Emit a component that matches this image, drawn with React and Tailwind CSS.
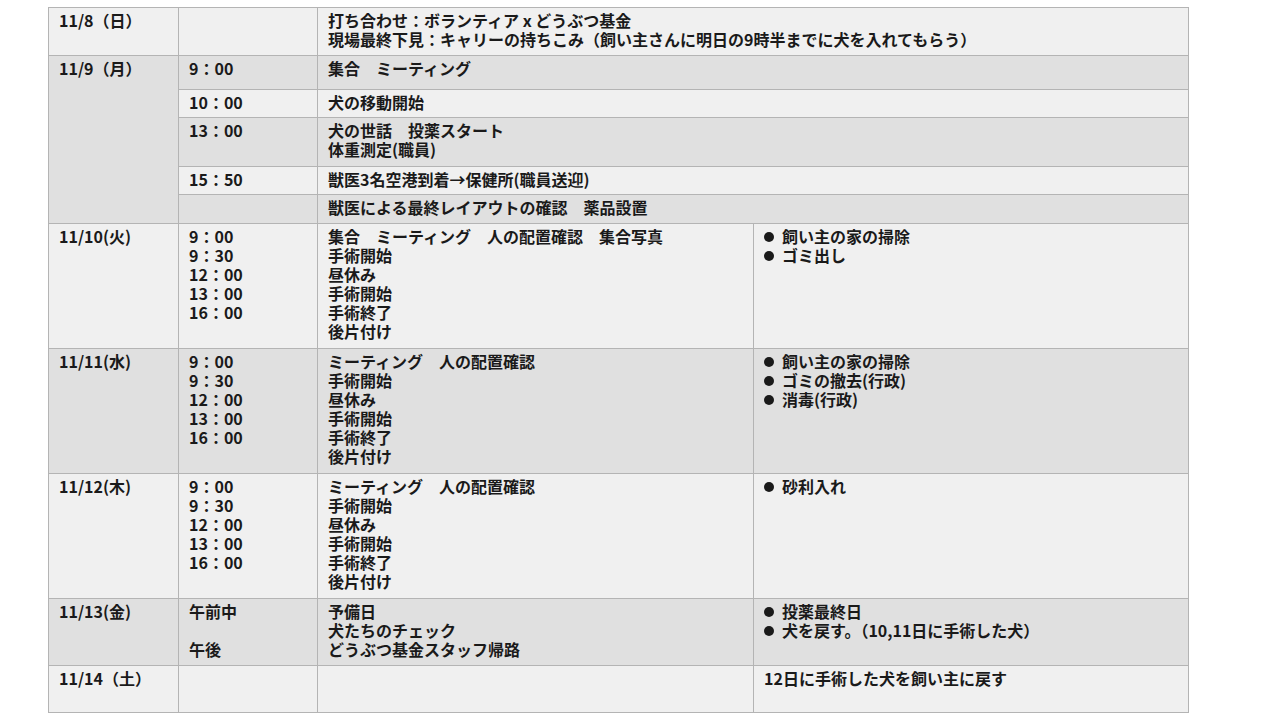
import React from 'react';

const LIGHT = 'bg-[#f0f0f0]';
const DARK = 'bg-[#e0e0e0]';
const cell = 'border border-[#b4b4b4] align-top pl-[10px] pr-2 pt-[3px] pb-0';

const Lines = ({ lines }) => (
  <>
    {lines.map((l, i) => (
      <div key={i} className="whitespace-pre">
        {l}
      </div>
    ))}
  </>
);

const Bullets = ({ items }) => (
  <>
    {items.map((l, i) => (
      <div key={i} className="flex items-center whitespace-pre">
        <span className="inline-block w-[10px] h-[10px] rounded-full bg-[#1a1a1a] mr-[8px]"></span>
        {l}
      </div>
    ))}
  </>
);

const surgery = ['9：00', '9：30', '12：00', '13：00', '16：00'];
const surgeryTasks = ['手術開始', '昼休み', '手術開始', '手術終了', '後片付け'];

const days = [
  {
    date: '11/10(火)',
    bg: LIGHT,
    h: 'h-[125px]',
    times: surgery,
    tasks: ['集合　ミーティング　人の配置確認　集合写真', ...surgeryTasks],
    notes: ['飼い主の家の掃除', 'ゴミ出し'],
  },
  {
    date: '11/11(水)',
    bg: DARK,
    h: 'h-[125px]',
    times: surgery,
    tasks: ['ミーティング　人の配置確認', ...surgeryTasks],
    notes: ['飼い主の家の掃除', 'ゴミの撤去(行政)', '消毒(行政)'],
  },
  {
    date: '11/12(木)',
    bg: LIGHT,
    h: 'h-[125px]',
    times: surgery,
    tasks: ['ミーティング　人の配置確認', ...surgeryTasks],
    notes: ['砂利入れ'],
  },
  {
    date: '11/13(金)',
    bg: DARK,
    h: 'h-[67px]',
    times: ['午前中', ' ', '午後'],
    tasks: ['予備日', '犬たちのチェック', 'どうぶつ基金スタッフ帰路'],
    notes: ['投薬最終日', '犬を戻す。（10,11日に手術した犬）'],
  },
];

export default function App() {
  return (
    <div
      className="w-[1280px] h-[720px] bg-white overflow-hidden text-[16px] leading-[19px] font-bold text-[#1a1a1a]"
      style={{ fontFamily: '"Noto Sans CJK JP", "Noto Sans", sans-serif' }}
    >
      <div className="pl-[48px] pt-[7px]">
        <table className="table-fixed border-collapse w-[1140px]">
          <colgroup>
            <col className="w-[130px]" />
            <col className="w-[139px]" />
            <col className="w-[436px]" />
            <col className="w-[435px]" />
          </colgroup>
          <tbody>
            {/* 11/8 */}
            <tr className={`h-[48px] ${LIGHT}`}>
              <td className={cell}>11/8（日）</td>
              <td className={cell}></td>
              <td className={cell} colSpan={2}>
                <Lines
                  lines={[
                    '打ち合わせ：ボランティア x どうぶつ基金',
                    '現場最終下見：キャリーの持ちこみ（飼い主さんに明日の9時半までに犬を入れてもらう）',
                  ]}
                />
              </td>
            </tr>

            {/* 11/9 */}
            <tr className={`h-[34px] ${DARK}`}>
              <td className={cell} rowSpan={5}>11/9（月）</td>
              <td className={cell}>9：00</td>
              <td className={cell} colSpan={2}>集合　ミーティング</td>
            </tr>
            <tr className={`h-[28px] ${LIGHT}`}>
              <td className={cell}>10：00</td>
              <td className={cell} colSpan={2}>犬の移動開始</td>
            </tr>
            <tr className={`h-[49px] ${DARK}`}>
              <td className={cell}>13：00</td>
              <td className={cell} colSpan={2}>
                <Lines lines={['犬の世話　投薬スタート', '体重測定(職員)']} />
              </td>
            </tr>
            <tr className={`h-[28px] ${LIGHT}`}>
              <td className={cell}>15：50</td>
              <td className={cell} colSpan={2}>獣医3名空港到着→保健所(職員送迎)</td>
            </tr>
            <tr className={`h-[29px] ${DARK}`}>
              <td className={cell}></td>
              <td className={cell} colSpan={2}>獣医による最終レイアウトの確認　薬品設置</td>
            </tr>

            {days.map((d) => (
              <tr key={d.date} className={`${d.h} ${d.bg}`}>
                <td className={cell}>{d.date}</td>
                <td className={cell}>
                  <Lines lines={d.times} />
                </td>
                <td className={cell}>
                  <Lines lines={d.tasks} />
                </td>
                <td className={cell}>
                  <Bullets items={d.notes} />
                </td>
              </tr>
            ))}

            {/* 11/14 */}
            <tr className={`h-[47px] ${LIGHT}`}>
              <td className={cell}>11/14（土）</td>
              <td className={cell}></td>
              <td className={cell}></td>
              <td className={cell}>12日に手術した犬を飼い主に戻す</td>
            </tr>
          </tbody>
        </table>
      </div>
    </div>
  );
}
